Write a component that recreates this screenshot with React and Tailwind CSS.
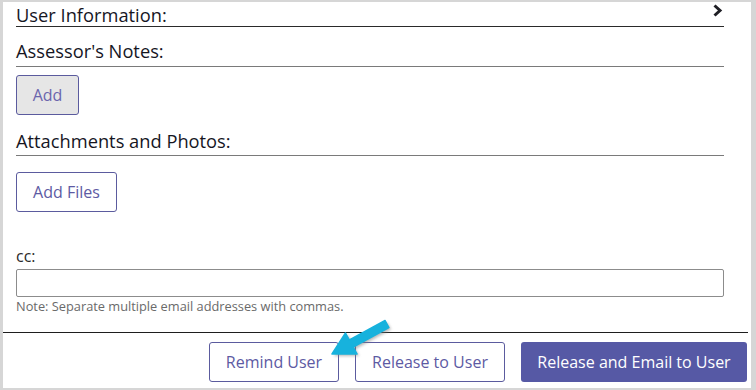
import React from 'react'

function SectionHeading({ children, className = "", lineClass = "border-[#7a7a7a]", icon }) {
  return (
    <div className={`flex items-start justify-between border-b ${lineClass} ${className}`}>
      <h2 className="text-[18.3px] leading-[23px] text-[#16161f]">{children}</h2>
      {icon}
    </div>
  )
}

function OutlineButton({ children, className = "" }) {
  return (
    <button className={`h-10 border border-[#5b5b9e] rounded-[3px] text-[16px] text-[#5d5aa3] ${className}`}>
      {children}
    </button>
  )
}

function Chevron() {
  return (
    <svg width="11" height="13" viewBox="0 0 11 13" className="mt-[1px] mr-[1px]">
      <polyline points="2.5,1.5 8,6.5 2.5,11.5" fill="none" stroke="#1f1f25" strokeWidth="3" />
    </svg>
  )
}

function Arrow() {
  return (
    <svg width="80" height="50" viewBox="0 0 80 50" className="absolute left-[318px] top-[310px] pointer-events-none">
      <defs>
        <filter id="sh" x="-20%" y="-20%" width="140%" height="140%">
          <feGaussianBlur stdDeviation="1.5" />
        </filter>
      </defs>
      <polygon
        points="67.1,10.5 31.4,30 27.5,23 14,44 39.1,44 35.2,37 70.9,17.5"
        fill="#7a7a7a"
        opacity="0.55"
        filter="url(#sh)"
        transform="translate(2,2)"
      />
      <polygon
        points="67.1,10.5 31.4,30 27.5,23 14,44 39.1,44 35.2,37 70.9,17.5"
        fill="#17b2dd"
        stroke="#17b2dd"
        strokeWidth="1.5"
        strokeLinejoin="round"
      />
    </svg>
  )
}

export default function App() {
  return (
    <div className="relative w-[756px] h-[390px] bg-[#d6d6d6] pt-[2px] pl-[3px] pr-[5px] pb-[2px] font-['Open_Sans',sans-serif]">
      <div className="flex flex-col h-full bg-white">
        <div className="flex flex-col pl-[13px] pr-[27px]">
          <SectionHeading lineClass="border-[#2a2a2a]" className="pt-[1px]" icon={<Chevron />}>
            User Information:
          </SectionHeading>
          <SectionHeading className="mt-[12px] pb-[4px]">Assessor's Notes:</SectionHeading>
          <div className="mt-[8px]">
            <button className="h-10 w-[63px] bg-[#e6e6e6] border border-[#5b5b9e] rounded-[3px] text-[16px] text-[#6b65ad]">
              Add
            </button>
          </div>
          <SectionHeading className="mt-[14px] pb-[3px]">Attachments and Photos:</SectionHeading>
          <div className="mt-[16px]">
            <OutlineButton className="w-[101px] bg-white">Add Files</OutlineButton>
          </div>
          <label className="mt-[33px] text-[16px] leading-[22px] text-[#2a2a2a]">cc:</label>
          <input type="text" className="mt-[2px] h-[28px] w-full border border-[#8c8c8c] rounded-[2px] outline-none" />
          <p className="text-[12.8px] leading-[18px] text-[#6a6a6a]">
            Note: Separate multiple email addresses with commas.
          </p>
        </div>
        <div className="mt-[17px] mr-[3px] border-t border-[#1e1e1e] flex justify-end gap-4 pt-[9px] pr-[1px]">
          <OutlineButton className="w-[130px] bg-white">Remind User</OutlineButton>
          <OutlineButton className="w-[150px] bg-white">Release to User</OutlineButton>
          <button className="h-10 w-[226px] bg-[#5659a5] rounded-[3px] text-[16px] text-white">
            Release and Email to User
          </button>
        </div>
      </div>
      <Arrow />
    </div>
  )
}
